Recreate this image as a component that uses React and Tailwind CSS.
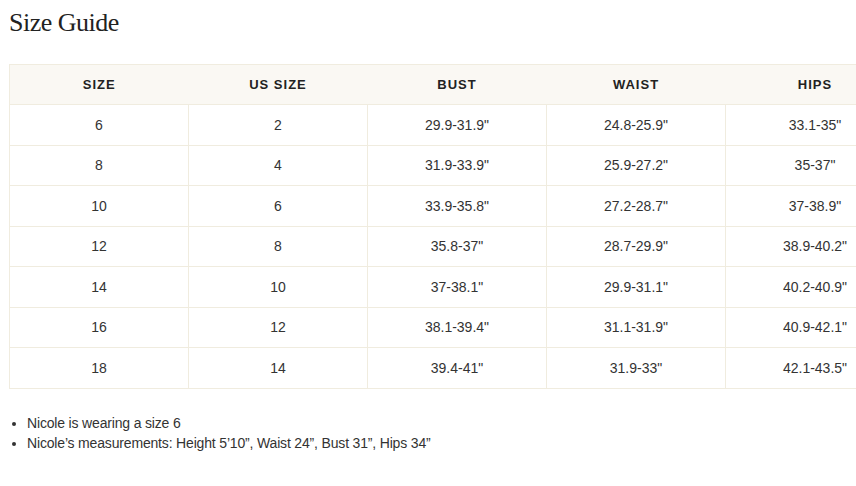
import React from "react";

const rows = [
  ["6", "2", '29.9-31.9"', '24.8-25.9"', '33.1-35"'],
  ["8", "4", '31.9-33.9"', '25.9-27.2"', '35-37"'],
  ["10", "6", '33.9-35.8"', '27.2-28.7"', '37-38.9"'],
  ["12", "8", '35.8-37"', '28.7-29.9"', '38.9-40.2"'],
  ["14", "10", '37-38.1"', '29.9-31.1"', '40.2-40.9"'],
  ["16", "12", '38.1-39.4"', '31.1-31.9"', '40.9-42.1"'],
  ["18", "14", '39.4-41"', '31.9-33"', '42.1-43.5"'],
];

const headers = ["Size", "US Size", "Bust", "Waist", "Hips"];

export default function App() {
  return (
    <div className="w-[856px] h-[486px] overflow-hidden bg-white text-[#333]">
      <h1 className="pl-[9px] pt-[7px] h-[64px] text-[26px] leading-[32px] tracking-[-0.5px] text-[#222] font-['Liberation_Serif',serif]">
        Size Guide
      </h1>

      <div className="pl-[9px]">
        <table className="w-[895px] table-fixed border-collapse font-['Liberation_Sans',Arial,sans-serif]">
          <thead>
            <tr className="bg-[#faf8f3] h-[40px]">
              {headers.map((h) => (
                <th
                  key={h}
                  className="w-[179px] border-t border-[#f0ecdf] first:border-l text-[13px] font-bold uppercase tracking-[1px] text-[#222] text-center align-middle"
                >
                  {h}
                </th>
              ))}
            </tr>
          </thead>
          <tbody>
            {rows.map((r, i) => (
              <tr key={i} className="h-[40.5px]">
                {r.map((c, j) => (
                  <td
                    key={j}
                    className="border border-[#f0ecdf] pt-[1px] text-[14px] text-center align-middle text-[#333]"
                  >
                    {c}
                  </td>
                ))}
              </tr>
            ))}
          </tbody>
        </table>
      </div>

      <ul className="mt-[24px] pl-[27px] list-disc text-[14px] leading-[20px] tracking-[-0.17px] text-[#333] font-['Liberation_Sans',Arial,sans-serif]">
        <li>Nicole is wearing a size 6</li>
        <li>Nicole’s measurements: Height 5’10”, Waist 24”, Bust 31”, Hips 34”</li>
      </ul>
    </div>
  );
}
